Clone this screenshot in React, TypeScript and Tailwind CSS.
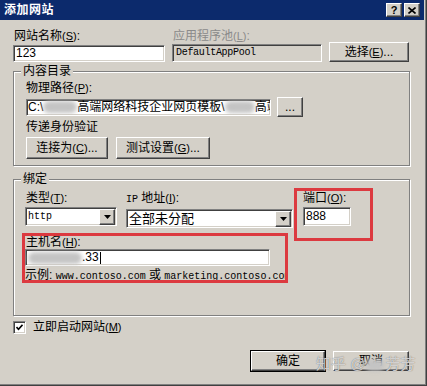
import React from "react";

const sans = "font-['Liberation_Sans','Noto_Sans_CJK_SC',sans-serif]";
const mono = "font-['Liberation_Mono','Noto_Sans_CJK_SC',monospace]";

const sunken =
  "border border-t-[#808080] border-l-[#808080] border-b-white border-r-white shadow-[inset_1px_1px_0_#404040,inset_-1px_-1px_0_#d4d0c8]";
const raised =
  "border border-t-white border-l-white border-r-[#404040] border-b-[#404040] shadow-[inset_-1px_-1px_0_#808080] bg-[#d4d0c8]";

function Key({ k }: { k: string }) {
  return (
    <span className="text-[11px]">
      (<span className="underline">{k}</span>)
    </span>
  );
}

function Blur({ w }: { w: number }) {
  return (
    <span
      className="inline-block h-[12px] bg-[#c4c4c4] blur-[2px] rounded-full align-middle"
      style={{ width: w }}
    />
  );
}

function Btn({ children, w, h = 20, def = false }: { children: React.ReactNode; w: number; h?: number; def?: boolean }) {
  return (
    <div
      className={`${raised} flex items-center justify-center text-[12px] ${def ? "outline outline-1 outline-black" : ""}`}
      style={{ width: w, height: h }}
    >
      {children}
    </div>
  );
}

function Arrow() {
  return (
    <div className={`${raised} w-[16px] h-[16px] flex items-center justify-center`}>
      <svg width="7" height="4" viewBox="0 0 7 4">
        <path d="M0 0h7L3.5 4z" fill="#000" />
      </svg>
    </div>
  );
}

function Group({ title, h, children }: { title: string; h: number; children: React.ReactNode }) {
  return (
    <div
      className="relative border border-[#808080] shadow-[inset_1px_1px_0_#fff,1px_1px_0_#fff] w-[397px]"
      style={{ height: h }}
    >
      <span className="absolute -top-[8px] left-[7px] bg-[#d4d0c8] px-[2px] leading-[14px] text-[12px]">{title}</span>
      {children}
    </div>
  );
}

export default function App() {
  return (
    <div
      className={`${sans} relative w-[427px] h-[386px] bg-[#d4d0c8] text-black text-[12px] shadow-[inset_-1px_-1px_0_#404040,inset_-2px_-2px_0_#808080] overflow-hidden`}
    >
      {/* title bar */}
      <div className="h-[20px] w-[424px] bg-[#0c2a6c] flex items-center justify-between pl-[4px] pr-[4px]">
        <span className="text-white font-bold text-[12px] leading-[20px] tracking-[0.5px]">添加网站</span>
        <div className="flex gap-[2px]">
          <div className={`${raised} w-[16px] h-[14px] flex items-center justify-center text-[11px] font-bold leading-none`}>?</div>
          <div className={`${raised} w-[16px] h-[14px] flex items-center justify-center`}>
            <svg width="8" height="7" viewBox="0 0 8 7">
              <path d="M0.5 0.5L7.5 6.5M7.5 0.5L0.5 6.5" stroke="#000" strokeWidth="1.6" />
            </svg>
          </div>
        </div>
      </div>

      <div className="pl-[13px]">
        {/* site name row */}
        <div className="flex gap-[7px] mt-[9px]">
          <div className="flex flex-col w-[152px]">
            <span className="leading-[14px] pl-[1px]">网站名称<Key k="S" />:</span>
            <div className={`${sunken} bg-white h-[17px] mt-[2px] pl-[2px] leading-[15px]`}>123</div>
          </div>
          <div className="flex flex-col w-[150px]">
            <span className="leading-[14px] pl-[1px] text-[#8a8a8a]">应用程序池<Key k="L" />:</span>
            <div className={`${sunken} ${mono} h-[18px] mt-[1px] pl-[3px] text-[10px] leading-[16px] tracking-[-0.3px]`}>DefaultAppPool</div>
          </div>
          <div className="flex flex-col justify-end">
            <Btn w={80}>选择<Key k="E" />...</Btn>
          </div>
        </div>

        {/* content directory */}
        <div className="mt-[9px]">
          <Group title="内容目录" h={95}>
            <div className="pl-[12px] pt-[9px] flex flex-col">
              <span className="leading-[14px]">物理路径<Key k="P" />:</span>
              <div className="flex items-center gap-[6px] mt-[2px] h-[20px]">
                <div className={`${sunken} bg-white w-[245px] h-[17px] pl-[1px] leading-[15px] whitespace-nowrap overflow-hidden`}>
                  C:\<Blur w={34} />高端网络科技企业网页模板\<Blur w={30} />高端
                </div>
                <Btn w={26}>...</Btn>
              </div>
              <span className="leading-[14px] mt-[3px]">传递身份验证</span>
              <div className="flex gap-[8px] mt-[3px]">
                <Btn w={82} h={22}>连接为<Key k="C" />...</Btn>
                <Btn w={94} h={22}>测试设置<Key k="G" />...</Btn>
              </div>
            </div>
          </Group>
        </div>

        {/* binding */}
        <div className="mt-[13px]">
          <Group title="绑定" h={137}>
            <div className="pl-[11px] pt-[11px]">
              <div className="flex">
                <div className="flex flex-col w-[92px]">
                  <span className="leading-[14px] pl-[1px]">类型<Key k="T" />:</span>
                  <div className={`${sunken} bg-white h-[19px] mt-[2px] flex items-center justify-between pr-[1px]`}>
                    <span className={`${mono} text-[10px] pl-[2px]`}>http</span>
                    <Arrow />
                  </div>
                </div>
                <div className="flex flex-col w-[167px] ml-[9px]">
                  <span className="leading-[14px]">
                    <span className={`${mono} text-[10px]`}>IP</span> 地址<Key k="I" />:
                  </span>
                  <div className={`${sunken} bg-white h-[19px] mt-[2px] flex items-center justify-between pr-[1px]`}>
                    <span className="pl-[2px] text-[13px]">全部未分配</span>
                    <Arrow />
                  </div>
                </div>
                <div className="flex flex-col ml-[10px]">
                  <span className="leading-[14px]">端口<Key k="O" />:</span>
                  <div className={`${sunken} bg-white w-[48px] h-[19px] mt-[2px] pl-[2px] leading-[17px]`}>888</div>
                </div>
              </div>

              <div className="flex flex-col w-[262px] mt-[7px] overflow-hidden">
                <span className="leading-[14px] pl-[1px]">主机名<Key k="H" />:</span>
                <div className={`${sunken} bg-white w-[245px] h-[17px] leading-[15px] pl-[2px] whitespace-nowrap`}>
                  <Blur w={54} />.33<span className="inline-block w-[1px] h-[12px] bg-black align-middle ml-[1px]" />
                </div>
                <span className="leading-[14px] mt-[2px] whitespace-nowrap">
                  示例: <span className={`${mono} text-[10px]`}>www.contoso.com</span> 或 <span className={`${mono} text-[10px]`}>marketing.contoso.com</span>
                </span>
              </div>
            </div>
          </Group>
        </div>

        {/* start now */}
        <div className="flex items-center gap-[7px] mt-[4px]">
          <div className={`${sunken} bg-white w-[13px] h-[13px] flex items-center justify-center`}>
            <svg width="7" height="7" viewBox="0 0 7 7">
              <path d="M0.5 3l2 2.3L6.5 0.8" stroke="#000" strokeWidth="1.6" fill="none" />
            </svg>
          </div>
          <span className="leading-[14px]">立即启动网站<Key k="M" /></span>
        </div>

        {/* buttons */}
        <div className="flex justify-end gap-[8px] mt-[17px] pr-[18px]">
          <Btn w={74} def>确定</Btn>
          <Btn w={76}>取消</Btn>
        </div>
      </div>

      {/* annotation boxes */}
      <div className="absolute left-[294px] top-[188px] w-[79px] h-[53px] border-[3px] border-[#dc3a40]" />
      <div className="absolute left-[22px] top-[233px] w-[266px] h-[50px] border-[3px] border-[#dc3a40]" />

      {/* watermark */}
      <div className="absolute left-[316px] top-[353px] text-[15px] text-white/70 [text-shadow:0_0_1px_#555] whitespace-nowrap">
        知乎 @<Blur w={20} />芳芳
      </div>
    </div>
  );
}
